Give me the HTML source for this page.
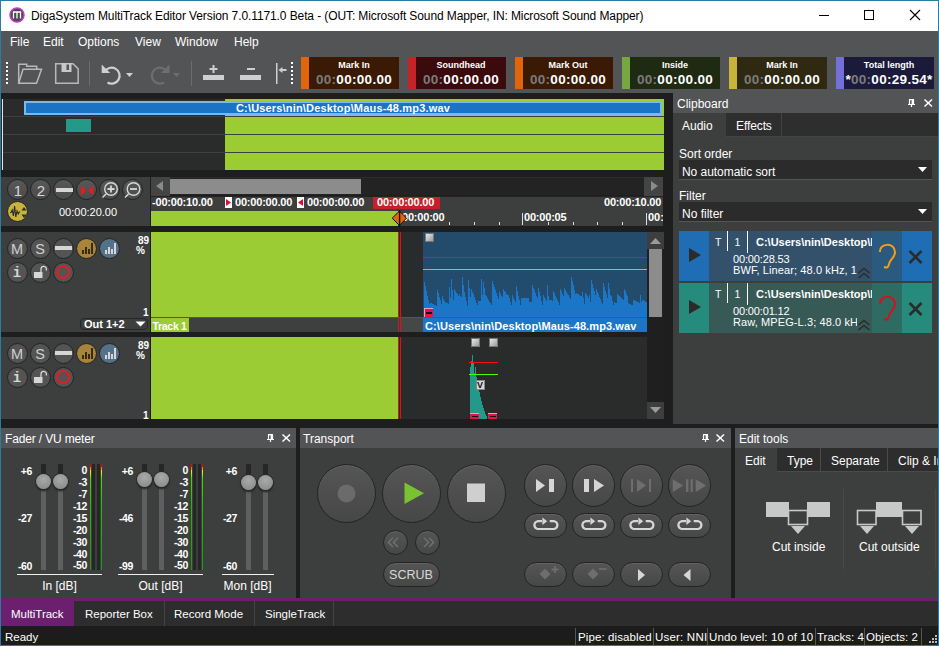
<!DOCTYPE html>
<html><head><meta charset="utf-8">
<style>
*{margin:0;padding:0;box-sizing:border-box}
html,body{width:939px;height:646px;overflow:hidden;background:#3d3f3e}
body{position:relative;font-family:"Liberation Sans",sans-serif;font-size:12px;color:#fff}
.a{position:absolute}
.t{position:absolute;white-space:nowrap;line-height:1}
.tc{position:absolute;top:57px;width:98px;height:32px}
.tc .s{position:absolute;left:0;top:0;width:8px;height:32px}
.tc .h{position:absolute;left:8px;right:0;top:3.5px;text-align:center;font-weight:bold;font-size:9px;line-height:1;letter-spacing:0}
.tc .v{position:absolute;left:8px;right:0;top:15.5px;text-align:center;font-weight:bold;font-size:13.5px;line-height:1;letter-spacing:0.3px}
.tc .v i{font-style:normal;color:#7b7b7b}
.rb{position:absolute;width:21px;height:21px;border-radius:50%;background:linear-gradient(#585858,#4b4b4b);border:1.5px solid #232323}
.ph{position:absolute;height:20px;background:#535456}
.ph .t{top:5px;left:4px;color:#fff}
</style></head><body>
<!-- window border -->
<div class="a" style="left:0;top:0;width:939px;height:646px;border:1px solid #2b7ca3;z-index:50;pointer-events:none"></div>
<!-- title bar -->
<div class="a" style="left:1px;top:1px;width:937px;height:30px;background:#fff"></div>
<svg class="a" style="left:9px;top:7px" width="16" height="16"><circle cx="8" cy="8" r="7" fill="#4a4a4a" stroke="#c43bd0" stroke-width="1.5"/><path d="M4.5 11.5V5h7v6.5M8 5.5v6" fill="none" stroke="#fff" stroke-width="1.3"/></svg>
<div class="t" style="left:31px;top:10px;color:#000;font-size:12px;letter-spacing:-0.1px">DigaSystem MultiTrack Editor Version 7.0.1171.0 Beta - (OUT: Microsoft Sound Mapper, IN: Microsoft Sound Mapper)</div>
<!-- min max close -->
<div class="a" style="left:819px;top:15px;width:10px;height:1px;background:#000"></div>
<div class="a" style="left:864px;top:10px;width:10px;height:10px;border:1px solid #000"></div>
<svg class="a" style="left:909px;top:9px" width="12" height="12"><path d="M1 1L11 11M11 1L1 11" stroke="#000" stroke-width="1.1"/></svg>

<!-- menu + toolbar bg -->
<div class="a" style="left:1px;top:31px;width:937px;height:62px;background:#535456"></div>
<div class="t" style="left:10px;top:36px">File</div>
<div class="t" style="left:43px;top:36px">Edit</div>
<div class="t" style="left:78px;top:36px">Options</div>
<div class="t" style="left:135px;top:36px">View</div>
<div class="t" style="left:175px;top:36px">Window</div>
<div class="t" style="left:234px;top:36px">Help</div>


<!-- toolbar icons -->
<svg class="a" style="left:1px;top:55px" width="300" height="36">
 <g fill="#fff">
  <rect x="5" y="7" width="2" height="2"/><rect x="5" y="11" width="2" height="2"/><rect x="5" y="15" width="2" height="2"/><rect x="5" y="19" width="2" height="2"/><rect x="5" y="23" width="2" height="2"/><rect x="5" y="27" width="2" height="2"/>
  <rect x="290" y="7" width="2" height="2"/><rect x="290" y="11" width="2" height="2"/><rect x="290" y="15" width="2" height="2"/><rect x="290" y="19" width="2" height="2"/><rect x="290" y="23" width="2" height="2"/><rect x="290" y="27" width="2" height="2"/>
 </g>
 <g fill="none" stroke="#b8b8b8" stroke-width="1.5">
  <path d="M17.7 28.3V9.3h8v2h10v3"/>
  <path d="M17.7 28.3L22 14.3h18.5l-5 14z"/>
  <path d="M54.7 8.7h17.3l5.2 5.2v14.3h-22.5z"/>
 </g>
 <rect x="60.5" y="8" width="10" height="9" fill="#c8c8c8"/>
 <rect x="65.5" y="9.5" width="2.5" height="5.5" fill="#535456"/>
 <rect x="88" y="6" width="1" height="25" fill="#6d6d6d"/>
 <rect x="190" y="6" width="1" height="25" fill="#6d6d6d"/>
 <path d="M103.5 17a8 8 0 1 1 3 10.5" fill="none" stroke="#d0d0d0" stroke-width="2.2"/>
 <path d="M100.7 9.5v8.5h8.5z" fill="#d0d0d0"/>
 <path d="M125 18h7l-3.5 4z" fill="#d0d0d0"/>
 <path d="M166 17a8 8 0 1 0 -3 10.5" fill="none" stroke="#6e6e6e" stroke-width="2.2"/>
 <path d="M168.5 9.5v8.5h-8.5z" fill="#6e6e6e"/>
 <path d="M172 18h7l-3.5 4z" fill="#6e6e6e"/>
 <g fill="#cfcfcf">
  <rect x="202" y="20" width="21" height="5"/><rect x="211.5" y="10" width="2" height="8"/><rect x="208.5" y="13" width="8" height="2"/>
  <rect x="239" y="20" width="21" height="5"/><rect x="246" y="13" width="8" height="2"/>
  <rect x="275" y="8" width="1.5" height="21"/><path d="M277.5 15l4-3v2h4v2h-4v2z"/>
 </g>
</svg>

<!-- timecode boxes -->
<div class="tc" style="left:301px;background:#3a1a04"><div class="s" style="background:#e3650b"></div><div class="h">Mark In</div><div class="v"><i>00:</i>00:00.00</div></div>
<div class="tc" style="left:408px;background:#3a0a0c"><div class="s" style="background:#c52325"></div><div class="h">Soundhead</div><div class="v"><i>00:</i>00:00.00</div></div>
<div class="tc" style="left:515px;background:#3a1a04"><div class="s" style="background:#e3650b"></div><div class="h">Mark Out</div><div class="v"><i>00:</i>00:00.00</div></div>
<div class="tc" style="left:622px;background:#1f2a13"><div class="s" style="background:#77a740"></div><div class="h">Inside</div><div class="v"><i>00:</i>00:00.00</div></div>
<div class="tc" style="left:729px;background:#2e2910"><div class="s" style="background:#c8b43b"></div><div class="h">Mark In</div><div class="v"><i>00:</i>00:00.00</div></div>
<div class="tc" style="left:836px;background:#1b1a3b"><div class="s" style="background:#7370d9"></div><div class="h">Total length</div><div class="v">*<i>00:</i>00:29.54*</div></div>

<!-- dark main background -->
<div class="a" style="left:1px;top:93px;width:937px;height:335px;background:#1e1e1e"></div>

<!-- overview -->
<div class="a" style="left:1px;top:99px;width:663px;height:71px;background:#2a2c2b"></div>
<div class="a" style="left:225px;top:99px;width:439px;height:71px;background:#9bcc34"></div>
<div class="a" style="left:2px;top:99px;width:1px;height:71px;background:#e8e8e8"></div>
<div class="a" style="left:3px;top:116px;width:661px;height:1px;background:#3f3f3f"></div>
<div class="a" style="left:3px;top:134px;width:661px;height:1px;background:#3f3f3f"></div>
<div class="a" style="left:3px;top:152px;width:661px;height:1px;background:#3f3f3f"></div>
<div class="a" style="left:24px;top:101px;width:638px;height:14px;background:#1a73c5;border:2px solid #7db8ec"></div>
<div class="t" style="left:236px;top:103px;font-weight:bold;font-size:11px;letter-spacing:0.17px">C:\Users\nin\Desktop\Maus-48.mp3.wav</div>
<div class="a" style="left:66px;top:119px;width:25px;height:13px;background:#23998a"></div>


<!-- timeline control panel -->
<div class="a" style="left:1px;top:177px;width:149px;height:49px;background:#3d3f3e"></div>
<div class="rb" style="left:7px;top:179px"></div>
<div class="rb" style="left:30px;top:179px"></div>
<div class="rb" style="left:53px;top:179px"></div>
<div class="rb" style="left:76px;top:179px"></div>
<div class="rb" style="left:99px;top:179px"></div>
<div class="rb" style="left:122px;top:179px"></div>
<div class="rb" style="left:7px;top:201px;background:#c8b43c"></div>
<svg class="a" style="left:1px;top:177px" width="150" height="49">
 <text x="17" y="19" font-size="15" fill="#d6d6d6" text-anchor="middle" font-family="Liberation Sans">1</text>
 <text x="40" y="19" font-size="15" fill="#d6d6d6" text-anchor="middle" font-family="Liberation Sans">2</text>
 <rect x="55" y="11" width="17" height="4" fill="#d6d6d6"/>
 <path d="M80 8.5v10l5-5zM92 8.5v10l-5-5z" fill="#e41c1c"/>
 <circle cx="110" cy="12" r="6.3" fill="none" stroke="#d6d6d6" stroke-width="1.4"/><path d="M105 17l-3.5 3.5" stroke="#d6d6d6" stroke-width="1.6"/><path d="M106.5 12h7M110 8.5v7" stroke="#d6d6d6" stroke-width="1.8"/>
 <circle cx="132.5" cy="12" r="6.3" fill="none" stroke="#d6d6d6" stroke-width="1.4"/><path d="M127.5 17l-3.5 3.5" stroke="#d6d6d6" stroke-width="1.6"/><path d="M129 12h7" stroke="#d6d6d6" stroke-width="1.8"/>
 <path d="M9 35.5h1l1.2-2.5 1.2 6 1.2-10 1.2 11 1.2-6 1.2 3 1 -2h1" fill="none" stroke="#2b2b2b" stroke-width="1.1"/>
 <path d="M20.5 33.5l2.5-3.5 2.5 3.5zM20.5 37.5l2.5 3.5 2.5-3.5z" fill="#2b2b2b"/>
</svg>
<div class="t" style="left:59px;top:207px;font-size:11px;color:#fff">00:00:20.00</div>

<!-- ruler -->
<div class="a" style="left:151px;top:177px;width:512px;height:18px;background:#232323;border-top:1px solid #2c2c2c"></div>
<div class="a" style="left:151px;top:177px;width:19px;height:19px;background:#434544"></div>
<svg class="a" style="left:151px;top:177px" width="19" height="18"><path d="M12 4v10l-7-5z" fill="#8a8a8a"/></svg>
<div class="a" style="left:170px;top:179px;width:191px;height:15px;background:#8c8c8c"></div>
<div class="a" style="left:644px;top:177px;width:19px;height:19px;background:#434544"></div>
<svg class="a" style="left:644px;top:177px" width="19" height="18"><path d="M7 4v10l7-5z" fill="#8a8a8a"/></svg>
<div class="a" style="left:151px;top:196px;width:512px;height:15px;background:#3d3f3e;border-top:1px solid #232323"></div>
<div class="a" style="left:151px;top:211px;width:247px;height:15px;background:#9bcc34"></div>
<div class="a" style="left:398px;top:211px;width:265px;height:15px;background:#3d3f3e"></div>
<div class="t" style="left:152px;top:197px;font-size:11px;font-weight:bold;letter-spacing:-0.2px">-00:00:10.00</div>
<div class="a" style="left:225px;top:197px;width:7px;height:11px;background:#fff"></div>
<svg class="a" style="left:225px;top:197px" width="7" height="11"><path d="M1 2v7l5-3.5z" fill="#d4103c"/></svg>
<div class="t" style="left:235px;top:197px;font-size:11px;font-weight:bold;letter-spacing:-0.2px">00:00:00.00</div>
<div class="a" style="left:297px;top:197px;width:7px;height:11px;background:#fff"></div>
<svg class="a" style="left:297px;top:197px" width="7" height="11"><path d="M6 2v7l-5-3.5z" fill="#d4103c"/></svg>
<div class="t" style="left:307px;top:197px;font-size:11px;font-weight:bold;letter-spacing:-0.2px">00:00:00.00</div>
<div class="a" style="left:373px;top:197px;width:67px;height:12px;background:#c8202a"></div>
<div class="t" style="left:377px;top:197px;font-size:11px;font-weight:bold;letter-spacing:-0.2px">00:00:00.00</div>
<div class="t" style="left:604px;top:197px;font-size:11px;font-weight:bold;letter-spacing:-0.2px">00:00:10.00</div>
<svg class="a" style="left:151px;top:211px" width="512" height="15">
 <g fill="#e0e0e0">
  <rect x="298" y="11" width="1" height="3"/><rect x="323" y="11" width="1" height="3"/><rect x="348" y="11" width="1" height="3"/>
  <rect x="371" y="2" width="1" height="12"/>
  <rect x="397" y="11" width="1" height="3"/><rect x="422" y="11" width="1" height="3"/><rect x="446" y="11" width="1" height="3"/><rect x="471" y="11" width="1" height="3"/>
  <rect x="495" y="2" width="1" height="12"/>
 </g>
</svg>
<div class="t" style="left:402px;top:212px;font-size:11px;font-weight:bold;letter-spacing:-0.2px">00:00:00</div>
<div class="t" style="left:524px;top:212px;font-size:11px;font-weight:bold;letter-spacing:-0.2px">00:00:05</div>
<div class="t" style="left:648px;top:212px;font-size:11px;font-weight:bold;width:15px;overflow:hidden">00:</div>
<svg class="a" style="left:391px;top:210px" width="17" height="17"><path d="M1.2 8.2l7.2-7.2 7.2 7.2-7.2 7.2z" fill="#e3650b" stroke="#111" stroke-width="1"/><path d="M8.6 0v17" stroke="#111" stroke-width="1.4"/></svg>


<!-- track 1 -->
<div class="a" style="left:1px;top:232px;width:149px;height:100px;background:#3d3f3e"></div>
<div class="rb" style="left:7px;top:238px;background:#545454"></div>
<div class="rb" style="left:30px;top:238px;background:#545454"></div>
<div class="rb" style="left:53px;top:238px;background:#545454"></div>
<div class="rb" style="left:76px;top:238px;background:#a8853a"></div>
<div class="rb" style="left:99px;top:238px;background:#557089"></div>
<div class="rb" style="left:7px;top:262px;background:#545454"></div>
<div class="rb" style="left:30px;top:262px;background:#545454"></div>
<div class="rb" style="left:53px;top:262px;background:#545454"></div>
<svg class="a" style="left:1px;top:232px" width="150" height="60">
 <text x="16" y="21.5" font-size="14.5" fill="#d0d0d0" text-anchor="middle" font-family="Liberation Sans">M</text>
 <text x="39" y="21.5" font-size="14.5" fill="#d0d0d0" text-anchor="middle" font-family="Liberation Sans">S</text>
 <rect x="54" y="14" width="17" height="4" fill="#d6d6d6"/>
 <g fill="#3a2a10"><rect x="81" y="18" width="2" height="4"/><rect x="84" y="15" width="2" height="7"/><rect x="87" y="17" width="2" height="5"/><rect x="90" y="11" width="2" height="11"/></g>
 <g fill="#d6d6d6"><rect x="104" y="18" width="2" height="4"/><rect x="107" y="15" width="2" height="7"/><rect x="110" y="17" width="2" height="5"/><rect x="113" y="11" width="2" height="11"/></g>
 <text x="16" y="45" font-size="14" font-weight="bold" fill="#d6d6d6" text-anchor="middle" font-family="Liberation Mono">i</text>
 <rect x="33" y="40" width="8.5" height="6" fill="#d6d6d6"/><path d="M40 40v-3a2.7 2.7 0 0 1 5.4 0v1.5" fill="none" stroke="#d6d6d6" stroke-width="1.3"/>
 <circle cx="62" cy="40" r="6" fill="none" stroke="#e01d25" stroke-width="2.2"/>
</svg>
<div class="t" style="left:109px;width:40px;text-align:right;top:235.5px;font-size:10px;font-weight:bold">89</div>
<div class="t" style="left:136px;top:245.5px;font-size:10px;font-weight:bold">%</div>
<div class="t" style="left:108.5px;width:40px;text-align:right;top:307.5px;font-size:10px;font-weight:bold">1</div>
<div class="a" style="left:80px;top:318px;width:68px;height:12px;border:1px solid #262626;border-radius:4px;background:#3d3f3e"></div>
<div class="t" style="left:84px;top:319px;font-size:11px;font-weight:bold">Out 1+2</div>
<svg class="a" style="left:135px;top:321px" width="11" height="6"><path d="M0.5 0.5h10l-5 5z" fill="#fff"/></svg>
<div class="a" style="left:151px;top:232px;width:247px;height:85px;background:#9bcc34"></div>
<div class="a" style="left:398px;top:232px;width:249px;height:85px;background:#2a2c2b"></div>
<div class="a" style="left:151px;top:317px;width:496px;height:15px;background:#3e403f;border-top:1px solid #555"></div>
<div class="a" style="left:401px;top:318px;width:22px;height:14px;background:#464847"></div>
<div class="a" style="left:151px;top:318px;width:38px;height:14px;background:#9bcc34"></div>
<div class="t" style="left:152.5px;top:321px;font-size:10.5px;font-weight:bold;letter-spacing:-0.3px">Track 1</div>
<div class="a" style="left:423px;top:232px;width:224px;height:85px;background:#234b6b"></div>
<div class="a" style="left:423px;top:257px;width:224px;height:1px;background:#f70f0f"></div>
<div class="a" style="left:423px;top:269px;width:224px;height:1px;background:#4cff00"></div>
<svg class="a" style="left:423px;top:232px" width="224" height="85"><path d="M1 85V50h1V54h1V59h1V64h1V68h1V72h1V71h1V71h1V72h1V72h1V73h1V73h1V74h1V58h1V61h1V65h1V68h1V72h1V64h1V67h1V69h1V70h1V71h1V71h1V72h1V55h1V66h1V47h1V58h1V68h1V57h1V59h1V61h1V62h1V64h1V62h1V64h1V65h1V45h1V53h1V60h1V65h1V69h1V74h1V48h1V56h1V65h1V57h1V60h1V62h1V65h1V68h1V71h1V73h1V69h1V69h1V69h1V47h1V63h1V50h1V56h1V63h1V64h1V66h1V68h1V70h1V71h1V73h1V49h1V52h1V55h1V58h1V61h1V64h1V67h1V60h1V62h1V64h1V65h1V57h1V59h1V60h1V62h1V63h1V63h1V66h1V70h1V73h1V63h1V66h1V68h1V70h1V54h1V59h1V64h1V68h1V73h1V66h1V66h1V66h1V66h1V66h1V66h1V66h1V66h1V70h1V70h1V70h1V53h1V56h1V58h1V61h1V64h1V66h1V56h1V60h1V64h1V69h1V73h1V63h1V65h1V67h1V69h1V53h1V64h1V68h1V68h1V68h1V69h1V59h1V61h1V64h1V66h1V68h1V70h1V73h1V57h1V59h1V62h1V64h1V56h1V58h1V60h1V62h1V63h1V65h1V67h1V45h1V49h1V53h1V58h1V62h1V61h1V62h1V62h1V63h1V64h1V64h1V60h1V66h1V72h1V61h1V62h1V64h1V66h1V63h1V70h1V48h1V52h1V56h1V59h1V63h1V57h1V60h1V62h1V65h1V67h1V70h1V72h1V51h1V55h1V59h1V62h1V66h1V51h1V57h1V63h1V64h1V69h1V73h1V70h1V71h1V71h1V62h1V63h1V64h1V65h1V66h1V67h1V68h1V57h1V59h1V62h1V64h1V71h1V72h1V72h1V73h1V73h1V68h1V68h1V69h1V69h1V70h1V70h1V71h1V63h1V70h1V68h1V68h1V69h1V70h1V70h1V85Z" fill="#1b76c8"/></svg>
<div class="a" style="left:423px;top:317px;width:224px;height:15px;background:#1b76c8;border-top:1px solid #555"></div>
<div class="t" style="left:425px;top:321px;font-size:11px;font-weight:bold;letter-spacing:0.1px">C:\Users\nin\Desktop\Maus-48.mp3.wav</div>
<div class="a" style="left:425px;top:233px;width:9px;height:9px;background:linear-gradient(135deg,#e8e8e8,#9a9a9a);border:1px solid #777"></div>
<div class="a" style="left:424px;top:308px;width:9px;height:9px;background:#e0134a;border-top:1px solid #f3a0b8;border-left:1px solid #f3a0b8"></div>
<div class="a" style="left:425.5px;top:312px;width:6px;height:1.5px;background:#111"></div>
<div class="a" style="left:398px;top:232px;width:1px;height:100px;background:#d01818"></div>
<div class="a" style="left:400px;top:232px;width:1px;height:100px;background:#d01818"></div>

<!-- track 2 -->
<div class="a" style="left:1px;top:337px;width:149px;height:82px;background:#3d3f3e"></div>
<div class="rb" style="left:7px;top:343px;background:#545454"></div>
<div class="rb" style="left:30px;top:343px;background:#545454"></div>
<div class="rb" style="left:53px;top:343px;background:#545454"></div>
<div class="rb" style="left:76px;top:343px;background:#a8853a"></div>
<div class="rb" style="left:99px;top:343px;background:#557089"></div>
<div class="rb" style="left:7px;top:367px;background:#545454"></div>
<div class="rb" style="left:30px;top:367px;background:#545454"></div>
<div class="rb" style="left:53px;top:367px;background:#545454"></div>
<svg class="a" style="left:1px;top:337px" width="150" height="60">
 <text x="16" y="21.5" font-size="14.5" fill="#d0d0d0" text-anchor="middle" font-family="Liberation Sans">M</text>
 <text x="39" y="21.5" font-size="14.5" fill="#d0d0d0" text-anchor="middle" font-family="Liberation Sans">S</text>
 <rect x="54" y="14" width="17" height="4" fill="#d6d6d6"/>
 <g fill="#3a2a10"><rect x="81" y="18" width="2" height="4"/><rect x="84" y="15" width="2" height="7"/><rect x="87" y="17" width="2" height="5"/><rect x="90" y="11" width="2" height="11"/></g>
 <g fill="#d6d6d6"><rect x="104" y="18" width="2" height="4"/><rect x="107" y="15" width="2" height="7"/><rect x="110" y="17" width="2" height="5"/><rect x="113" y="11" width="2" height="11"/></g>
 <text x="16" y="45" font-size="14" font-weight="bold" fill="#d6d6d6" text-anchor="middle" font-family="Liberation Mono">i</text>
 <rect x="33" y="40" width="8.5" height="6" fill="#d6d6d6"/><path d="M40 40v-3a2.7 2.7 0 0 1 5.4 0v1.5" fill="none" stroke="#d6d6d6" stroke-width="1.3"/>
 <circle cx="62" cy="40" r="6" fill="none" stroke="#e01d25" stroke-width="2.2"/>
</svg>
<div class="t" style="left:109px;width:40px;text-align:right;top:340.5px;font-size:10px;font-weight:bold">89</div>
<div class="t" style="left:136px;top:350.5px;font-size:10px;font-weight:bold">%</div>
<div class="t" style="left:108.5px;width:40px;text-align:right;top:410.5px;font-size:10px;font-weight:bold">1</div>
<div class="a" style="left:151px;top:337px;width:247px;height:82px;background:#9bcc34"></div>
<div class="a" style="left:398px;top:337px;width:249px;height:82px;background:#2a2c2b"></div>
<div class="a" style="left:398px;top:337px;width:1px;height:82px;background:#d01818"></div>
<div class="a" style="left:400px;top:337px;width:1px;height:82px;background:#d01818"></div>
<svg class="a" style="left:469px;top:337px" width="30" height="82">
 <path d="M1 82V30h1V24h1V18h1V26h1V36h1V30h1V40h1V46h1V50h1V55h1V60h1V64h1V68h1V71h1V74h1V77h1V79h1V82z" fill="#23998a"/>
 <rect x="0" y="25" width="29" height="1" fill="#f70f0f"/>
 <rect x="0" y="37" width="29" height="1" fill="#4cff00"/>
</svg>
<div class="a" style="left:471px;top:338px;width:9px;height:9px;background:linear-gradient(135deg,#e8e8e8,#9a9a9a);border:1px solid #777"></div>
<div class="a" style="left:489px;top:338px;width:9px;height:9px;background:linear-gradient(135deg,#e8e8e8,#9a9a9a);border:1px solid #777"></div>
<div class="a" style="left:476px;top:380px;width:9px;height:10px;background:#d8d8d8;border:1px solid #888"></div>
<div class="t" style="left:477px;top:381px;font-size:9px;font-weight:bold;color:#111">V</div>
<div class="a" style="left:470px;top:413px;width:9px;height:6px;background:#e0134a;border-top:1px solid #f3a0b8"></div>
<div class="a" style="left:488px;top:413px;width:9px;height:6px;background:#e0134a;border-top:1px solid #f3a0b8"></div>
<div class="a" style="left:471.5px;top:415.5px;width:6px;height:1.5px;background:#111"></div>
<div class="a" style="left:489.5px;top:415.5px;width:6px;height:1.5px;background:#111"></div>

<!-- v scrollbar -->
<div class="a" style="left:647px;top:232px;width:17px;height:187px;background:#1f1f1f"></div>
<div class="a" style="left:647px;top:232px;width:17px;height:17px;background:#3d3f3e"></div>
<svg class="a" style="left:647px;top:232px" width="17" height="17"><path d="M3 12h11l-5.5-6z" fill="#9a9a9a"/></svg>
<div class="a" style="left:649px;top:249px;width:13px;height:68px;background:#8c8c8c"></div>
<div class="a" style="left:647px;top:402px;width:17px;height:17px;background:#3d3f3e"></div>
<svg class="a" style="left:647px;top:402px" width="17" height="17"><path d="M3 5h11l-5.5 6z" fill="#9a9a9a"/></svg>


<!-- right panel -->
<div class="a" style="left:673px;top:93px;width:265px;height:331px;background:#3d3f3e"></div>
<div class="ph" style="left:673px;top:93px;width:265px"><div class="t">Clipboard</div></div>
<svg class="a" style="left:907px;top:99px" width="9" height="9"><path d="M2 0.6h5M2.5 0.5v5M6.5 0.5v5M1 5.5h7M4.5 5.5v2.5" stroke="#fff" stroke-width="1.2" fill="none"/><rect x="4.6" y="1" width="1.9" height="4.5" fill="#fff"/></svg><svg class="a" style="left:924px;top:99px" width="9" height="9"><path d="M0.5 0.5l7.5 7M8 0.5l-7.5 7" stroke="#fff" stroke-width="1.5"/></svg>
<div class="a" style="left:673px;top:113px;width:265px;height:24px;background:#2e2e2e;border-bottom:1px solid #444"></div>
<div class="a" style="left:673px;top:113px;width:53px;height:25px;background:#3d3f3e"></div>
<div class="a" style="left:781px;top:113px;width:1px;height:24px;background:#444"></div>
<div class="t" style="left:682px;top:120px">Audio</div>
<div class="t" style="left:736px;top:120px;letter-spacing:-0.1px">Effects</div>
<div class="t" style="left:679px;top:148px">Sort order</div>
<div class="a" style="left:679px;top:160px;width:253px;height:20px;background:#2b2b2b;border-bottom:1px solid #555"></div>
<div class="t" style="left:682px;top:166px;letter-spacing:-0.05px">No automatic sort</div>
<svg class="a" style="left:918px;top:167px" width="10" height="6"><path d="M0 0h9l-4.5 5z" fill="#fff"/></svg>
<div class="t" style="left:679px;top:190px">Filter</div>
<div class="a" style="left:679px;top:202px;width:253px;height:20px;background:#2b2b2b;border-bottom:1px solid #555"></div>
<div class="t" style="left:682px;top:208px">No filter</div>
<svg class="a" style="left:918px;top:209px" width="10" height="6"><path d="M0 0h9l-4.5 5z" fill="#fff"/></svg>

<!-- clip items -->
<div class="a" style="left:679px;top:231px;width:253px;height:50px;background:#33516b"></div>
<div class="a" style="left:679px;top:231px;width:30px;height:50px;background:#1f6eb5"></div>
<div class="a" style="left:872px;top:231px;width:30px;height:50px;background:#2b5a80"></div>
<div class="a" style="left:902px;top:231px;width:30px;height:50px;background:#1f6eb5"></div>
<div class="a" style="left:679px;top:283px;width:253px;height:50px;background:#375a56"></div>
<div class="a" style="left:679px;top:283px;width:30px;height:50px;background:#268a7c"></div>
<div class="a" style="left:872px;top:283px;width:30px;height:50px;background:#2e6b63"></div>
<div class="a" style="left:902px;top:283px;width:30px;height:50px;background:#268a7c"></div>
<svg class="a" style="left:679px;top:231px" width="253" height="102">
 <path d="M10 17v14l12-7z M10 69v14l12-7z" fill="#2b2b2b"/>
 <rect x="48" y="0" width="1" height="20" fill="#fff"/><rect x="68" y="0" width="1" height="22" fill="#fff"/>
 <rect x="48" y="52" width="1" height="20" fill="#fff"/><rect x="68" y="52" width="1" height="22" fill="#fff"/>
 <path d="M230.5 20l12 12M242.5 20l-12 12 M230.5 72l12 12M242.5 72l-12 12" stroke="#2b2b2b" stroke-width="2.6"/>
 <path d="M201 21c-1-9 15-10 15 0c0 6-5 7-6 12c-1 4-2 4-5 3" fill="none" stroke="#f5a00c" stroke-width="2"/>
 <path d="M201 73c-1-9 15-10 15 0c0 6-5 7-6 12c-1 4-2 4-5 3" fill="none" stroke="#d8101c" stroke-width="2"/>
</svg>
<div class="a" style="left:709px;top:231px;width:163px;height:102px;overflow:hidden;font-size:11px">
 <div class="t" style="left:6px;top:6px;font-size:10.5px">T</div>
 <div class="t" style="left:25.5px;top:6px;font-size:10.5px">1</div>
 <div class="t" style="left:47px;top:6px;font-weight:bold">C:\Users\nin\Desktop\Maus</div>
 <div class="t" style="left:24px;top:23px;letter-spacing:-0.15px">00:00:28.53</div>
 <div class="t" style="left:24px;top:34.2px;letter-spacing:0.1px">BWF, Linear; 48.0 kHz, 1</div>
 <div class="t" style="left:6px;top:58px;font-size:10.5px">T</div>
 <div class="t" style="left:25.5px;top:58px;font-size:10.5px">1</div>
 <div class="t" style="left:47px;top:58px;font-weight:bold">C:\Users\nin\Desktop\Maus</div>
 <div class="t" style="left:24px;top:75px;letter-spacing:-0.15px">00:00:01.12</div>
 <div class="t" style="left:24px;top:86.2px;letter-spacing:0.1px;width:124px;overflow:hidden">Raw, MPEG-L.3; 48.0 kHz</div>
</div>

<svg class="a" style="left:857px;top:267px" width="14" height="64"><path d="M1.5 6l5.5-4.5 5.5 4.5M1.5 11l5.5-4.5 5.5 4.5M1.5 58l5.5-4.5 5.5 4.5M1.5 63l5.5-4.5 5.5 4.5" fill="none" stroke="#2b2b2b" stroke-width="1.4"/></svg>
<!-- bottom panels -->
<div class="a" style="left:1px;top:428px;width:295px;height:170px;background:#3d3f3e"></div>
<div class="ph" style="left:1px;top:428px;width:295px"><div class="t" style="letter-spacing:-0.15px">Fader / VU meter</div></div>
<svg class="a" style="left:266px;top:434px" width="9" height="9"><path d="M2 0.6h5M2.5 0.5v5M6.5 0.5v5M1 5.5h7M4.5 5.5v2.5" stroke="#fff" stroke-width="1.2" fill="none"/><rect x="4.6" y="1" width="1.9" height="4.5" fill="#fff"/></svg><svg class="a" style="left:282px;top:434px" width="9" height="9"><path d="M0.5 0.5l7.5 7M8 0.5l-7.5 7" stroke="#fff" stroke-width="1.5"/></svg>
<div class="a" style="left:300px;top:428px;width:431px;height:170px;background:#3d3f3e"></div>
<div class="ph" style="left:300px;top:428px;width:431px"><div class="t" style="left:3px">Transport</div></div>
<svg class="a" style="left:701px;top:434px" width="9" height="9"><path d="M2 0.6h5M2.5 0.5v5M6.5 0.5v5M1 5.5h7M4.5 5.5v2.5" stroke="#fff" stroke-width="1.2" fill="none"/><rect x="4.6" y="1" width="1.9" height="4.5" fill="#fff"/></svg><svg class="a" style="left:716px;top:434px" width="9" height="9"><path d="M0.5 0.5l7.5 7M8 0.5l-7.5 7" stroke="#fff" stroke-width="1.5"/></svg>
<div class="a" style="left:735px;top:428px;width:203px;height:170px;background:#3d3f3e"></div>
<div class="ph" style="left:735px;top:428px;width:203px"><div class="t">Edit tools</div></div>
<div class="a" style="left:296px;top:428px;width:4px;height:170px;background:#1e1e1e"></div>
<div class="a" style="left:731px;top:428px;width:4px;height:170px;background:#1e1e1e"></div>

<!-- bottom tabs / status -->
<div class="a" style="left:1px;top:598px;width:937px;height:3px;background:#6b1f6e"></div>
<div class="a" style="left:1px;top:601px;width:937px;height:25px;background:#2d2d2d"></div>
<div class="a" style="left:1px;top:598px;width:73px;height:28px;background:#6b1f6e"></div>
<div class="a" style="left:164px;top:601px;width:1px;height:25px;background:#444"></div>
<div class="a" style="left:254px;top:601px;width:1px;height:25px;background:#444"></div>
<div class="a" style="left:333px;top:601px;width:1px;height:25px;background:#444"></div>
<div class="t" style="left:11px;top:608.5px;font-size:11.5px">MultiTrack</div>
<div class="t" style="left:85px;top:608.5px;font-size:11.5px">Reporter Box</div>
<div class="t" style="left:174px;top:608.5px;font-size:11.5px">Record Mode</div>
<div class="t" style="left:265px;top:608.5px;font-size:11.5px">SingleTrack</div>
<div class="a" style="left:1px;top:626px;width:937px;height:19px;background:#1c1c1c"></div>
<div class="t" style="left:5px;top:631.5px;font-size:11.5px">Ready</div>
<div class="a" style="left:575px;top:628px;width:1px;height:17px;background:#555"></div>
<div class="a" style="left:653px;top:628px;width:1px;height:17px;background:#555"></div>
<div class="a" style="left:707px;top:628px;width:1px;height:17px;background:#555"></div>
<div class="a" style="left:815px;top:628px;width:1px;height:17px;background:#555"></div>
<div class="a" style="left:864px;top:628px;width:1px;height:17px;background:#555"></div>
<div class="a" style="left:921px;top:628px;width:1px;height:17px;background:#555"></div>
<div class="t" style="left:578px;top:631.5px;font-size:11.5px;letter-spacing:0.1px">Pipe: disabled</div>
<div class="t" style="left:655px;top:631.5px;font-size:11.5px;letter-spacing:0.2px">User: NNI</div>
<div class="t" style="left:709px;top:631.5px;font-size:11.5px;letter-spacing:0.1px">Undo level: 10 of 10</div>
<div class="t" style="left:817px;top:631.5px;font-size:11.5px">Tracks: 4</div>
<div class="t" style="left:866px;top:631.5px;font-size:11.5px">Objects: 2</div>
<svg class="a" style="left:927px;top:634px" width="11" height="11"><g fill="#bbb"><rect x="8" y="1" width="2" height="2"/><rect x="5" y="4" width="2" height="2"/><rect x="8" y="4" width="2" height="2"/><rect x="2" y="7" width="2" height="2"/><rect x="5" y="7" width="2" height="2"/><rect x="8" y="7" width="2" height="2"/></g></svg>

<!-- fader content -->
<div class="t" style="left:-8px;width:40px;text-align:right;top:466px;font-size:10.5px;font-weight:bold;letter-spacing:-0.4px">+6</div>
<div class="t" style="left:-8px;width:40px;text-align:right;top:513px;font-size:10.5px;font-weight:bold;letter-spacing:-0.4px">-27</div>
<div class="t" style="left:-8px;width:40px;text-align:right;top:561px;font-size:10.5px;font-weight:bold;letter-spacing:-0.4px">-60</div>
<div class="a" style="left:41px;top:464px;width:5px;height:106px;background:#5f5f5f"></div>
<div class="a" style="left:41px;top:464px;width:5px;height:17px;background:#262626"></div>
<div class="a" style="left:36px;top:474px;width:15px;height:15px;border-radius:50%;background:radial-gradient(circle at 50% 35%,#a9a9a9,#8e8e8e 75%,#b0b0b0 100%);box-shadow:0 0 0 1px #2b2b2b,0 2px 2px #1e1e1e"></div>
<div class="a" style="left:58px;top:464px;width:5px;height:106px;background:#5f5f5f"></div>
<div class="a" style="left:58px;top:464px;width:5px;height:17px;background:#262626"></div>
<div class="a" style="left:53px;top:474px;width:15px;height:15px;border-radius:50%;background:radial-gradient(circle at 50% 35%,#a9a9a9,#8e8e8e 75%,#b0b0b0 100%);box-shadow:0 0 0 1px #2b2b2b,0 2px 2px #1e1e1e"></div>
<div class="t" style="left:47px;width:40px;text-align:right;top:465px;font-size:10.5px;font-weight:bold;letter-spacing:-0.4px">0</div>
<div class="t" style="left:47px;width:40px;text-align:right;top:477px;font-size:10.5px;font-weight:bold;letter-spacing:-0.4px">-3</div>
<div class="t" style="left:47px;width:40px;text-align:right;top:489px;font-size:10.5px;font-weight:bold;letter-spacing:-0.4px">-7</div>
<div class="t" style="left:47px;width:40px;text-align:right;top:501px;font-size:10.5px;font-weight:bold;letter-spacing:-0.4px">-12</div>
<div class="t" style="left:47px;width:40px;text-align:right;top:513px;font-size:10.5px;font-weight:bold;letter-spacing:-0.4px">-15</div>
<div class="t" style="left:47px;width:40px;text-align:right;top:525px;font-size:10.5px;font-weight:bold;letter-spacing:-0.4px">-20</div>
<div class="t" style="left:47px;width:40px;text-align:right;top:537px;font-size:10.5px;font-weight:bold;letter-spacing:-0.4px">-30</div>
<div class="t" style="left:47px;width:40px;text-align:right;top:549px;font-size:10.5px;font-weight:bold;letter-spacing:-0.4px">-40</div>
<div class="t" style="left:47px;width:40px;text-align:right;top:560px;font-size:10.5px;font-weight:bold;letter-spacing:-0.4px">-50</div>
<div class="a" style="left:90px;top:464px;width:1.4px;height:106px;background:linear-gradient(#ff0000 0,#ff0000 3px,#ff8000 3px,#ff8000 6px,#f0f000 6px,#c0f000 10px,#40e000 14px,#20c000 40px,#1a9a10 100%)"></div>
<div class="a" style="left:101px;top:464px;width:1.4px;height:106px;background:linear-gradient(#ff0000 0,#ff0000 3px,#ff8000 3px,#ff8000 6px,#f0f000 6px,#c0f000 10px,#40e000 14px,#20c000 40px,#1a9a10 100%)"></div>
<div class="a" style="left:92px;top:464px;width:3px;height:106px;background:#262626"></div>
<div class="a" style="left:97px;top:464px;width:3px;height:106px;background:#262626"></div>
<div class="a" style="left:17px;top:574px;width:85px;height:1px;background:#f0f0f0"></div>
<div class="t" style="left:9.5px;width:100px;text-align:center;top:579.5px">In [dB]</div>
<div class="t" style="left:93px;width:40px;text-align:right;top:466px;font-size:10.5px;font-weight:bold;letter-spacing:-0.4px">+6</div>
<div class="t" style="left:93px;width:40px;text-align:right;top:513px;font-size:10.5px;font-weight:bold;letter-spacing:-0.4px">-46</div>
<div class="t" style="left:93px;width:40px;text-align:right;top:561px;font-size:10.5px;font-weight:bold;letter-spacing:-0.4px">-99</div>
<div class="a" style="left:142px;top:464px;width:5px;height:106px;background:#5f5f5f"></div>
<div class="a" style="left:142px;top:464px;width:5px;height:15px;background:#262626"></div>
<div class="a" style="left:137px;top:472px;width:15px;height:15px;border-radius:50%;background:radial-gradient(circle at 50% 35%,#a9a9a9,#8e8e8e 75%,#b0b0b0 100%);box-shadow:0 0 0 1px #2b2b2b,0 2px 2px #1e1e1e"></div>
<div class="a" style="left:159px;top:464px;width:5px;height:106px;background:#5f5f5f"></div>
<div class="a" style="left:159px;top:464px;width:5px;height:15px;background:#262626"></div>
<div class="a" style="left:154px;top:472px;width:15px;height:15px;border-radius:50%;background:radial-gradient(circle at 50% 35%,#a9a9a9,#8e8e8e 75%,#b0b0b0 100%);box-shadow:0 0 0 1px #2b2b2b,0 2px 2px #1e1e1e"></div>
<div class="t" style="left:148px;width:40px;text-align:right;top:465px;font-size:10.5px;font-weight:bold;letter-spacing:-0.4px">0</div>
<div class="t" style="left:148px;width:40px;text-align:right;top:477px;font-size:10.5px;font-weight:bold;letter-spacing:-0.4px">-3</div>
<div class="t" style="left:148px;width:40px;text-align:right;top:489px;font-size:10.5px;font-weight:bold;letter-spacing:-0.4px">-7</div>
<div class="t" style="left:148px;width:40px;text-align:right;top:501px;font-size:10.5px;font-weight:bold;letter-spacing:-0.4px">-12</div>
<div class="t" style="left:148px;width:40px;text-align:right;top:513px;font-size:10.5px;font-weight:bold;letter-spacing:-0.4px">-15</div>
<div class="t" style="left:148px;width:40px;text-align:right;top:525px;font-size:10.5px;font-weight:bold;letter-spacing:-0.4px">-20</div>
<div class="t" style="left:148px;width:40px;text-align:right;top:537px;font-size:10.5px;font-weight:bold;letter-spacing:-0.4px">-30</div>
<div class="t" style="left:148px;width:40px;text-align:right;top:549px;font-size:10.5px;font-weight:bold;letter-spacing:-0.4px">-40</div>
<div class="t" style="left:148px;width:40px;text-align:right;top:560px;font-size:10.5px;font-weight:bold;letter-spacing:-0.4px">-50</div>
<div class="a" style="left:191px;top:464px;width:1.4px;height:106px;background:linear-gradient(#ff0000 0,#ff0000 3px,#ff8000 3px,#ff8000 6px,#f0f000 6px,#c0f000 10px,#40e000 14px,#20c000 40px,#1a9a10 100%)"></div>
<div class="a" style="left:202px;top:464px;width:1.4px;height:106px;background:linear-gradient(#ff0000 0,#ff0000 3px,#ff8000 3px,#ff8000 6px,#f0f000 6px,#c0f000 10px,#40e000 14px,#20c000 40px,#1a9a10 100%)"></div>
<div class="a" style="left:193px;top:464px;width:3px;height:106px;background:#262626"></div>
<div class="a" style="left:198px;top:464px;width:3px;height:106px;background:#262626"></div>
<div class="a" style="left:118px;top:574px;width:85px;height:1px;background:#f0f0f0"></div>
<div class="t" style="left:110.5px;width:100px;text-align:center;top:579.5px">Out [dB]</div>
<div class="t" style="left:197px;width:40px;text-align:right;top:466px;font-size:10.5px;font-weight:bold;letter-spacing:-0.4px">+6</div>
<div class="t" style="left:197px;width:40px;text-align:right;top:513px;font-size:10.5px;font-weight:bold;letter-spacing:-0.4px">-27</div>
<div class="t" style="left:197px;width:40px;text-align:right;top:561px;font-size:10.5px;font-weight:bold;letter-spacing:-0.4px">-60</div>
<div class="a" style="left:246px;top:464px;width:5px;height:106px;background:#5f5f5f"></div>
<div class="a" style="left:246px;top:464px;width:5px;height:18px;background:#262626"></div>
<div class="a" style="left:241px;top:475px;width:15px;height:15px;border-radius:50%;background:radial-gradient(circle at 50% 35%,#a9a9a9,#8e8e8e 75%,#b0b0b0 100%);box-shadow:0 0 0 1px #2b2b2b,0 2px 2px #1e1e1e"></div>
<div class="a" style="left:263px;top:464px;width:5px;height:106px;background:#5f5f5f"></div>
<div class="a" style="left:263px;top:464px;width:5px;height:18px;background:#262626"></div>
<div class="a" style="left:258px;top:475px;width:15px;height:15px;border-radius:50%;background:radial-gradient(circle at 50% 35%,#a9a9a9,#8e8e8e 75%,#b0b0b0 100%);box-shadow:0 0 0 1px #2b2b2b,0 2px 2px #1e1e1e"></div>
<div class="a" style="left:222px;top:574px;width:52px;height:1px;background:#f0f0f0"></div>
<div class="t" style="left:197.5px;width:100px;text-align:center;top:579.5px">Mon [dB]</div>
<!-- transport content -->
<div class="a" style="left:317.0px;top:464.0px;width:59px;height:59px;border-radius:50%;background:linear-gradient(#555555,#474747);border:1.5px solid #232323;box-shadow:inset 0 1px 0 #626262"></div>
<div class="a" style="left:382.0px;top:464.0px;width:59px;height:59px;border-radius:50%;background:linear-gradient(#555555,#474747);border:1.5px solid #232323;box-shadow:inset 0 1px 0 #626262"></div>
<div class="a" style="left:447.0px;top:464.0px;width:59px;height:59px;border-radius:50%;background:linear-gradient(#555555,#474747);border:1.5px solid #232323;box-shadow:inset 0 1px 0 #626262"></div>
<div class="a" style="left:382.5px;top:529.5px;width:25px;height:25px;border-radius:50%;background:linear-gradient(#555555,#474747);border:1.5px solid #232323;box-shadow:inset 0 1px 0 #626262"></div>
<div class="a" style="left:414.5px;top:529.5px;width:25px;height:25px;border-radius:50%;background:linear-gradient(#555555,#474747);border:1.5px solid #232323;box-shadow:inset 0 1px 0 #626262"></div>
<div class="a" style="left:382.5px;top:562.0px;width:57px;height:25px;border-radius:12.5px;background:linear-gradient(#555555,#474747);border:1.5px solid #232323;box-shadow:inset 0 1px 0 #626262"></div>
<div class="a" style="left:524.0px;top:464.0px;width:43px;height:43px;border-radius:50%;background:linear-gradient(#555555,#474747);border:1.5px solid #232323;box-shadow:inset 0 1px 0 #626262"></div>
<div class="a" style="left:524.0px;top:512.5px;width:43px;height:25px;border-radius:12.5px;background:linear-gradient(#555555,#474747);border:1.5px solid #232323;box-shadow:inset 0 1px 0 #626262"></div>
<div class="a" style="left:524.0px;top:562.0px;width:43px;height:25px;border-radius:12.5px;background:linear-gradient(#555555,#474747);border:1.5px solid #232323;box-shadow:inset 0 1px 0 #626262"></div>
<div class="a" style="left:572.0px;top:464.0px;width:43px;height:43px;border-radius:50%;background:linear-gradient(#555555,#474747);border:1.5px solid #232323;box-shadow:inset 0 1px 0 #626262"></div>
<div class="a" style="left:572.0px;top:512.5px;width:43px;height:25px;border-radius:12.5px;background:linear-gradient(#555555,#474747);border:1.5px solid #232323;box-shadow:inset 0 1px 0 #626262"></div>
<div class="a" style="left:572.0px;top:562.0px;width:43px;height:25px;border-radius:12.5px;background:linear-gradient(#555555,#474747);border:1.5px solid #232323;box-shadow:inset 0 1px 0 #626262"></div>
<div class="a" style="left:620.0px;top:464.0px;width:43px;height:43px;border-radius:50%;background:linear-gradient(#555555,#474747);border:1.5px solid #232323;box-shadow:inset 0 1px 0 #626262"></div>
<div class="a" style="left:620.0px;top:512.5px;width:43px;height:25px;border-radius:12.5px;background:linear-gradient(#555555,#474747);border:1.5px solid #232323;box-shadow:inset 0 1px 0 #626262"></div>
<div class="a" style="left:620.0px;top:562.0px;width:43px;height:25px;border-radius:12.5px;background:linear-gradient(#555555,#474747);border:1.5px solid #232323;box-shadow:inset 0 1px 0 #626262"></div>
<div class="a" style="left:668.0px;top:464.0px;width:43px;height:43px;border-radius:50%;background:linear-gradient(#555555,#474747);border:1.5px solid #232323;box-shadow:inset 0 1px 0 #626262"></div>
<div class="a" style="left:668.0px;top:512.5px;width:43px;height:25px;border-radius:12.5px;background:linear-gradient(#555555,#474747);border:1.5px solid #232323;box-shadow:inset 0 1px 0 #626262"></div>
<div class="a" style="left:668.0px;top:562.0px;width:43px;height:25px;border-radius:12.5px;background:linear-gradient(#555555,#474747);border:1.5px solid #232323;box-shadow:inset 0 1px 0 #626262"></div>
<svg class="a" style="left:300px;top:448px" width="431" height="150">
 <circle cx="46.5" cy="45.5" r="9" fill="#6b6b6b"/>
 <path d="M104.5 34.5v21.5l19.5-10.75z" fill="#7ac231"/>
 <rect x="167" y="35.5" width="18" height="18.5" fill="#cfcfcf"/>
 <path d="M93 89.8l-4.6 4.6 4.6 4.6M98 89.8l-4.6 4.6 4.6 4.6" fill="none" stroke="#6e6e6e" stroke-width="1.6"/>
 <path d="M124 89.8l4.6 4.6-4.6 4.6M129 89.8l4.6 4.6-4.6 4.6" fill="none" stroke="#6e6e6e" stroke-width="1.6"/>
 <text x="111" y="131" font-size="12.5" fill="#d8d8d8" text-anchor="middle" font-family="Liberation Sans">SCRUB</text>
 <path d="M236 31v13l9-6.5z" fill="#d6d6d6"/><rect x="249" y="31" width="5" height="13" fill="#d6d6d6"/>
 <rect x="284" y="31" width="5" height="13" fill="#d6d6d6"/><path d="M294 31v13l10-6.5z" fill="#d6d6d6"/>
 <rect x="331" y="31" width="2" height="13" fill="#6e6e6e"/><path d="M337 31v13l9-6.5z" fill="#6e6e6e"/><rect x="349" y="31" width="2" height="13" fill="#6e6e6e"/>
 <path d="M372.7 31.2v12.7l10.5-6.35z" fill="#6e6e6e"/><rect x="386" y="31.2" width="2.4" height="12.7" fill="#6e6e6e"/><rect x="390.6" y="31.2" width="2.2" height="12.7" fill="#6e6e6e"/><path d="M395.7 31.2v12.7l10.5-6.35z" fill="#6e6e6e"/>
 <g fill="none" stroke="#d6d6d6" stroke-width="2.2">
  <path d="M242 73.2h-4.5a4 4 0 0 0 0 7.8h16.8a4 4 0 0 0 0-7.8h-4.6"/>
  <path d="M290 73.2h-4.5a4 4 0 0 0 0 7.8h16.8a4 4 0 0 0 0-7.8h-4.6"/>
  <path d="M338 73.2h-4.5a4 4 0 0 0 0 7.8h16.8a4 4 0 0 0 0-7.8h-4.6"/>
  <path d="M386 73.2h-4.5a4 4 0 0 0 0 7.8h16.8a4 4 0 0 0 0-7.8h-4.6"/>
 </g>
 <g fill="#d6d6d6">
  <path d="M242.4 69.4v7.6l4.8-3.8z"/>
  <path d="M290.4 69.4v7.6l4.8-3.8z"/>
  <path d="M338.4 69.4v7.6l4.8-3.8z"/>
  <path d="M386.4 69.4v7.6l4.8-3.8z"/>
 </g>
 <path d="M245 120.5l5.5 5.5-5.5 5.5-5.5-5.5z" fill="#6e6e6e"/><path d="M251.5 121.5h7M255 118v7" stroke="#6e6e6e" stroke-width="1.8"/>
 <path d="M293 120.5l5.5 5.5-5.5 5.5-5.5-5.5z" fill="#6e6e6e"/><path d="M299 121h7.5" stroke="#6e6e6e" stroke-width="1.8"/>
 <path d="M338 121v12l7-6z" fill="#d6d6d6"/>
 <path d="M390.5 121v12l-7-6z" fill="#d6d6d6"/>
</svg>
<!-- edit tools -->
<div class="a" style="left:735px;top:448px;width:203px;height:24px;background:#2d2d2d;border-bottom:1px solid #4a4a4a"></div>
<div class="a" style="left:735px;top:448px;width:42px;height:25px;background:#3d3f3e"></div>
<div class="a" style="left:820px;top:448px;width:1px;height:24px;background:#4a4a4a"></div>
<div class="a" style="left:887px;top:448px;width:1px;height:24px;background:#4a4a4a"></div>
<div class="t" style="left:745px;top:455px">Edit</div>
<div class="t" style="left:787px;top:455px">Type</div>
<div class="t" style="left:831px;top:455px">Separate</div>
<div class="t" style="left:898px;top:455px">Clip &amp; In</div>
<div class="a" style="left:843px;top:489px;width:1px;height:80px;background:#4a4a4a"></div>
<div class="a" style="left:935px;top:489px;width:1px;height:80px;background:#4a4a4a"></div>
<svg class="a" style="left:735px;top:448px" width="203" height="150">
 <rect x="31" y="54" width="23" height="15" fill="#c8c8c8"/>
 <rect x="72" y="54" width="23" height="15" fill="#c8c8c8"/>
 <rect x="53.5" y="62.5" width="19" height="14" fill="none" stroke="#c8c8c8" stroke-width="1.6"/>
 <path d="M56 78h14l-7 8z" fill="#c8c8c8"/>
 <rect x="141" y="54" width="26" height="15" fill="#c8c8c8"/>
 <rect x="122.5" y="62.5" width="18.5" height="14" fill="none" stroke="#c8c8c8" stroke-width="1.6"/>
 <rect x="167.5" y="62.5" width="18.5" height="14" fill="none" stroke="#c8c8c8" stroke-width="1.6"/>
 <path d="M125 78h14l-7 8z M170 78h14l-7 8z" fill="#c8c8c8"/>
</svg>
<div class="t" style="left:772px;top:541px">Cut inside</div>
<div class="t" style="left:859px;top:541px">Cut outside</div>

</body></html>
